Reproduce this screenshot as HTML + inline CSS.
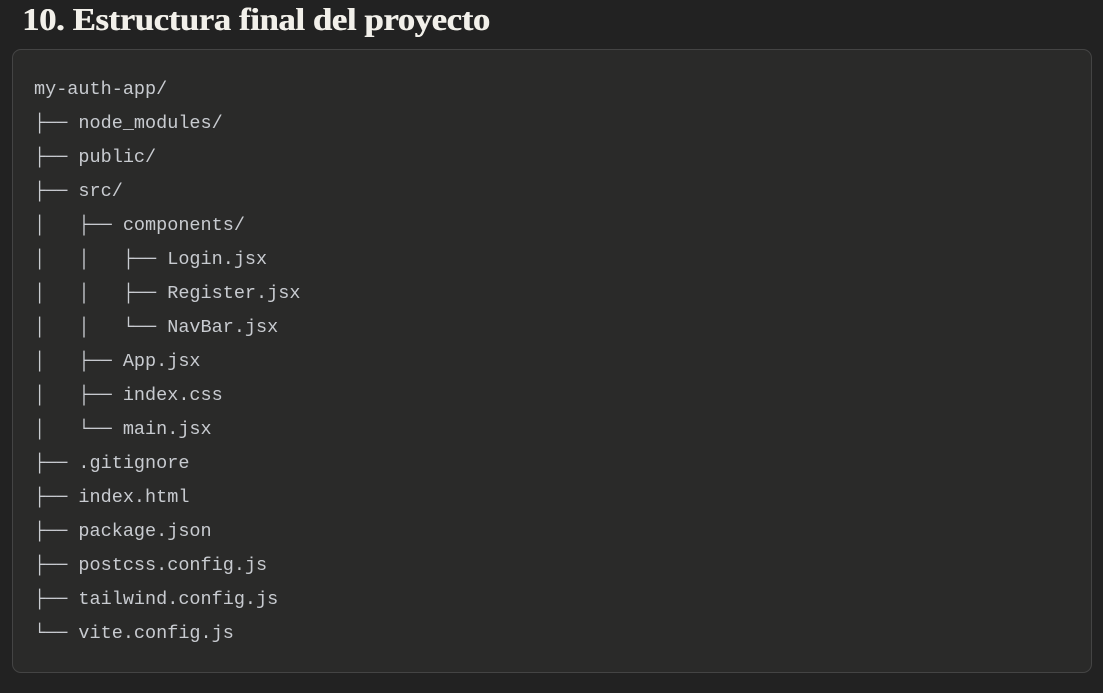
<!DOCTYPE html>
<html><head><meta charset="utf-8"><style>
html,body{margin:0;padding:0;background:#222222;width:1103px;height:693px;overflow:hidden}
h1{position:absolute;left:22px;top:1px;margin:0;font-family:"Liberation Serif",serif;font-weight:bold;font-size:32px;line-height:36px;color:#f2f0ea;letter-spacing:-0.3px;transform:scaleX(1.08);transform-origin:0 0;text-shadow:0.5px 0 0 #f2f0ea}
.box{position:absolute;left:12px;top:49px;width:1080px;height:624px;border:1px solid #444;border-radius:9px;background:#2a2a29;box-sizing:border-box}
pre{position:absolute;left:34px;top:73px;margin:0;font-family:"Liberation Mono","DejaVu Sans Mono",monospace;font-size:18.5px;line-height:34px;color:#c8cbd0}
</style></head><body>
<h1>10. Estructura final del proyecto</h1>
<div class="box"></div>
<pre>my-auth-app/
├── node_modules/
├── public/
├── src/
│   ├── components/
│   │   ├── Login.jsx
│   │   ├── Register.jsx
│   │   └── NavBar.jsx
│   ├── App.jsx
│   ├── index.css
│   └── main.jsx
├── .gitignore
├── index.html
├── package.json
├── postcss.config.js
├── tailwind.config.js
└── vite.config.js</pre>
</body></html>
